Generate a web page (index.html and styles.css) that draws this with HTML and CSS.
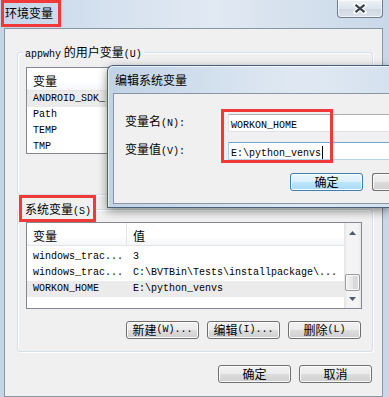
FILE: index.html
```html
<!DOCTYPE html>
<html lang="zh-CN">
<head>
<meta charset="utf-8">
<title>环境变量</title>
<link rel="stylesheet" href="styles.css">
</head>
<body>
<div class="window">
  <div class="titlebar">
    <span class="title">环境变量</span>
    <div class="close">
      <svg width="14" height="11" viewBox="0 0 14 11"><path d="M2.5 1.8L11.5 9.2M11.5 1.8L2.5 9.2" stroke="#fff" stroke-width="4.4" stroke-linecap="round"/><path d="M2.5 1.8L11.5 9.2M11.5 1.8L2.5 9.2" stroke="#3a4250" stroke-width="2.2"/></svg>
    </div>
  </div>
  <div class="client">
    <div class="group g-user">
      <div class="legend"><span class="m">appwhy</span> 的用户变量<span class="m">(U)</span></div>
      <div class="list">
        <div class="lmain">
          <div class="lhead"><div class="c1">变量</div><div class="c2">值</div></div>
          <div class="rows">
            <div class="row sel"><div class="c1 m">ANDROID_SDK_...</div><div class="c2 m">D:\Android</div></div>
            <div class="row"><div class="c1 m">Path</div><div class="c2 m">C:\Python27</div></div>
            <div class="row"><div class="c1 m">TEMP</div><div class="c2 m">%USERPROFILE%\AppData\Local\Temp</div></div>
            <div class="row"><div class="c1 m">TMP</div><div class="c2 m">%USERPROFILE%\AppData\Local\Temp</div></div>
          </div>
        </div>
      </div>
      <div class="btns">
        <div class="btn">新建<span class="m">(N)...</span></div>
        <div class="btn">编辑<span class="m">(E)...</span></div>
        <div class="btn">删除<span class="m">(D)</span></div>
      </div>
    </div>
    <div class="group g-sys">
      <div class="legend">系统变量<span class="m">(S)</span></div>
      <div class="list">
        <div class="lmain">
          <div class="lhead"><div class="c1">变量</div><div class="c2">值</div></div>
          <div class="rows">
            <div class="row"><div class="c1 m">windows_trac...</div><div class="c2 m">3</div></div>
            <div class="row"><div class="c1 m">windows_trac...</div><div class="c2 m">C:\BVTBin\Tests\installpackage\...</div></div>
            <div class="row sel"><div class="c1 m">WORKON_HOME</div><div class="c2 m">E:\python_venvs</div></div>
          </div>
        </div>
        <div class="sbar">
          <div class="arrow"><svg width="7" height="4" viewBox="0 0 7 4"><path d="M0 4L3.5 0L7 4Z" fill="#4e5a6b"/></svg></div>
          <div class="thumb"></div>
          <div class="arrow down"><svg width="7" height="4" viewBox="0 0 7 4"><path d="M0 0L3.5 4L7 0Z" fill="#4e5a6b"/></svg></div>
        </div>
      </div>
      <div class="btns">
        <div class="btn">新建<span class="m">(W)...</span></div>
        <div class="btn">编辑<span class="m">(I)...</span></div>
        <div class="btn">删除<span class="m">(L)</span></div>
      </div>
    </div>
    <div class="footer">
      <div class="btn">确定</div>
      <div class="btn">取消</div>
    </div>
  </div>
</div>

<div class="dialog">
  <div class="dtitle">编辑系统变量</div>
  <div class="dclient">
    <div class="dform">
      <div class="lbl">变量名<span class="m">(N):</span></div>
      <div class="field"><span class="m">WORKON_HOME</span></div>
      <div class="lbl">变量值<span class="m">(V):</span></div>
      <div class="field focus"><span class="m">E:\python_venvs</span><span class="caret"></span></div>
    </div>
    <div class="dbtns">
      <div class="btn def">确定</div>
      <div class="btn cut"></div>
    </div>
  </div>
</div>

<div class="mark mk1"></div>
<div class="mark mk2"></div>
<div class="mark mk3"></div>
</body>
</html>
```

FILE: styles.css
```css
* { box-sizing: border-box; }
html, body { margin: 0; padding: 0; }
body {
  width: 389px;
  height: 397px;
  overflow: hidden;
  position: relative;
  font-family: "Noto Sans CJK SC", sans-serif;
  font-size: 12px;
  color: #000;
  background: #d4e0ed;
}
.m {
  font-family: "Liberation Mono", "DejaVu Sans Mono", monospace;
  font-size: 10px;
}

/* main window */
.window {
  height: 397px;
  display: flex;
  flex-direction: column;
  padding: 0 6px 0 4px;
  background: linear-gradient(90deg, #c5d5e8 0%, #d6e2ef 30%, #e1e9f3 55%, #d3dfec 80%, #c9d8e9 100%);
}
.titlebar {
  height: 28px;
  flex: none;
  display: flex;
  justify-content: space-between;
  align-items: flex-start;
}
.title {
  margin: 5px 0 0 1px;
  line-height: 16px;
  font-size: 12px;
}
.close {
  width: 46px;
  height: 18px;
  border: 1px solid #6f7d8f;
  border-top: 0;
  border-radius: 0 0 4px 4px;
  background: linear-gradient(#eef2f7, #dde4ec 50%, #cfd8e3 51%, #dbe2eb);
  box-shadow: inset 0 0 0 1px rgba(255,255,255,.6);
  display: flex;
  align-items: center;
  justify-content: center;
}
.client {
  flex: 1;
  background: #f0f0f0;
  border: 1px solid #8996a6;
  display: flex;
  flex-direction: column;
}

/* group boxes */
.group {
  border: 1px solid #d5dfe5;
  border-radius: 3px;
  margin: 0 9px 0 12px;
  height: 143px;
  flex: none;
  box-shadow: inset 1px 1px 0 #fff, 1px 1px 0 #fff;
  display: flex;
  flex-direction: column;
}
.g-user { margin-top: 23px; }
.g-sys { margin-top: 14px; }
.legend {
  align-self: flex-start;
  margin: -8px 0 0 5px;
  padding: 0 2px;
  height: 13px;
  line-height: 13px;
  background: #f0f0f0;
  white-space: nowrap;
}
.g-user .list { margin-top: 9px; }
.g-sys .list { margin-top: 7px; }

/* list views */
.list {
  margin-left: 8px;
  width: 336px;
  height: 87px;
  flex: none;
  border: 1px solid #828790;
  background: #fff;
  display: flex;
}
.lmain {
  flex: 1;
  min-width: 0;
  display: flex;
  flex-direction: column;
}
.lhead {
  height: 23px;
  flex: none;
  display: flex;
  border-bottom: 1px solid #e5e5e5;
  line-height: 25px;
  background: linear-gradient(#fff 0%, #fff 60%, #f4f6f9 100%);
}
.lhead .c1 { border-right: 1px solid #e5e5e5; }
.c1 {
  width: 100px;
  flex: none;
  padding-left: 6px;
  overflow: hidden;
  white-space: nowrap;
}
.c2 {
  flex: 1;
  padding-left: 6px;
  overflow: hidden;
  white-space: nowrap;
}
.row {
  height: 16px;
  line-height: 16px;
  display: flex;
}
.row.sel { background: #ebebeb; }
.g-sys .rows { padding-top: 3px; }

.sbar {
  width: 17px;
  flex: none;
  background: linear-gradient(90deg, #e4e4e4, #f4f4f4 20%, #f4f4f4 80%, #e9e9e9);
  display: flex;
  flex-direction: column;
  align-items: center;
}
.arrow {
  height: 17px;
  width: 17px;
  display: flex;
  align-items: center;
  justify-content: center;
  padding-top: 3px;
}
.arrow.down {
  margin-top: auto;
  padding-top: 0;
  padding-bottom: 2px;
}
.thumb {
  margin-top: 34px;
  width: 15px;
  height: 17px;
  border: 1px solid #9a9a9a;
  border-radius: 2px;
  background: linear-gradient(90deg, #f3f3f3, #e6e6e6 50%, #d8d8d8 51%, #dcdcdc);
  box-shadow: inset 0 0 0 1px #fafafa;
}

/* buttons */
.btns {
  display: flex;
  justify-content: flex-end;
  gap: 8px;
  margin: 12px 11px 0 0;
}
.footer {
  display: flex;
  justify-content: flex-end;
  gap: 8px;
  margin: 13px 10px 0 0;
}
.btn {
  width: 73px;
  height: 18px;
  flex: none;
  border: 1px solid #707070;
  border-radius: 3px;
  background: linear-gradient(#f2f2f2 0%, #ebebeb 50%, #dddddd 51%, #cfcfcf 100%);
  box-shadow: inset 0 0 0 1px #fbfbfb;
  display: flex;
  align-items: center;
  justify-content: center;
  line-height: 16px;
  white-space: nowrap;
}
.btn.def {
  border-color: #3c7fb1;
  background: linear-gradient(#eaf6fd 0%, #d9f0fc 50%, #bee6fd 51%, #a7d9f5 100%);
}
.btn.cut {
  width: 18px;
  border-right: 0;
  border-radius: 3px 0 0 3px;
}

/* edit dialog */
.dialog {
  position: absolute;
  left: 107px;
  top: 65px;
  width: 282px;
  height: 143px;
  border: 1px solid #48607c;
  border-right: 0;
  border-radius: 6px 0 0 0;
  background: linear-gradient(90deg, #c1d2e6, #d4e1ee 40%, #e0e9f3 70%, #d5e1ee);
  box-shadow: 0 3px 10px rgba(0,0,0,.45), inset 1px 1px 0 rgba(255,255,255,.6);
  display: flex;
  flex-direction: column;
  overflow: hidden;
}
.dtitle {
  height: 27px;
  flex: none;
  padding-left: 7px;
  line-height: 28px;
}
.dclient {
  flex: 1;
  margin: 0 0 3px 5px;
  background: #f0f0f0;
  border: 1px solid #8996a6;
  border-right: 0;
}
.dform {
  display: grid;
  grid-template-columns: 103px 1fr;
  row-gap: 9px;
  align-items: center;
  padding: 19px 0 0 11px;
}
.lbl {
  white-space: nowrap;
  line-height: 16px;
}
.field {
  height: 18px;
  border: 1px solid #e2e3ea;
  border-top-color: #abadb3;
  border-right: 0;
  background: #fff;
  padding-left: 2px;
  line-height: 16px;
  white-space: nowrap;
}
.field.focus {
  border-color: #b5d2ec;
  border-top-color: #6ea5d8;
}
.caret {
  display: inline-block;
  width: 1px;
  height: 13px;
  background: #000;
  vertical-align: middle;
  margin-left: 1px;
}
.dbtns {
  display: flex;
  gap: 9px;
  padding-left: 176px;
  margin-top: 13px;
}

/* red annotations */
.mark {
  position: absolute;
  border: 3px solid #f03a3a;
}
.mk1 { left: 1px; top: 0; width: 60px; height: 27px; }
.mk2 { left: 19px; top: 195px; width: 77px; height: 27px; }
.mk3 { left: 221px; top: 109px; width: 112px; height: 54px; }
```
